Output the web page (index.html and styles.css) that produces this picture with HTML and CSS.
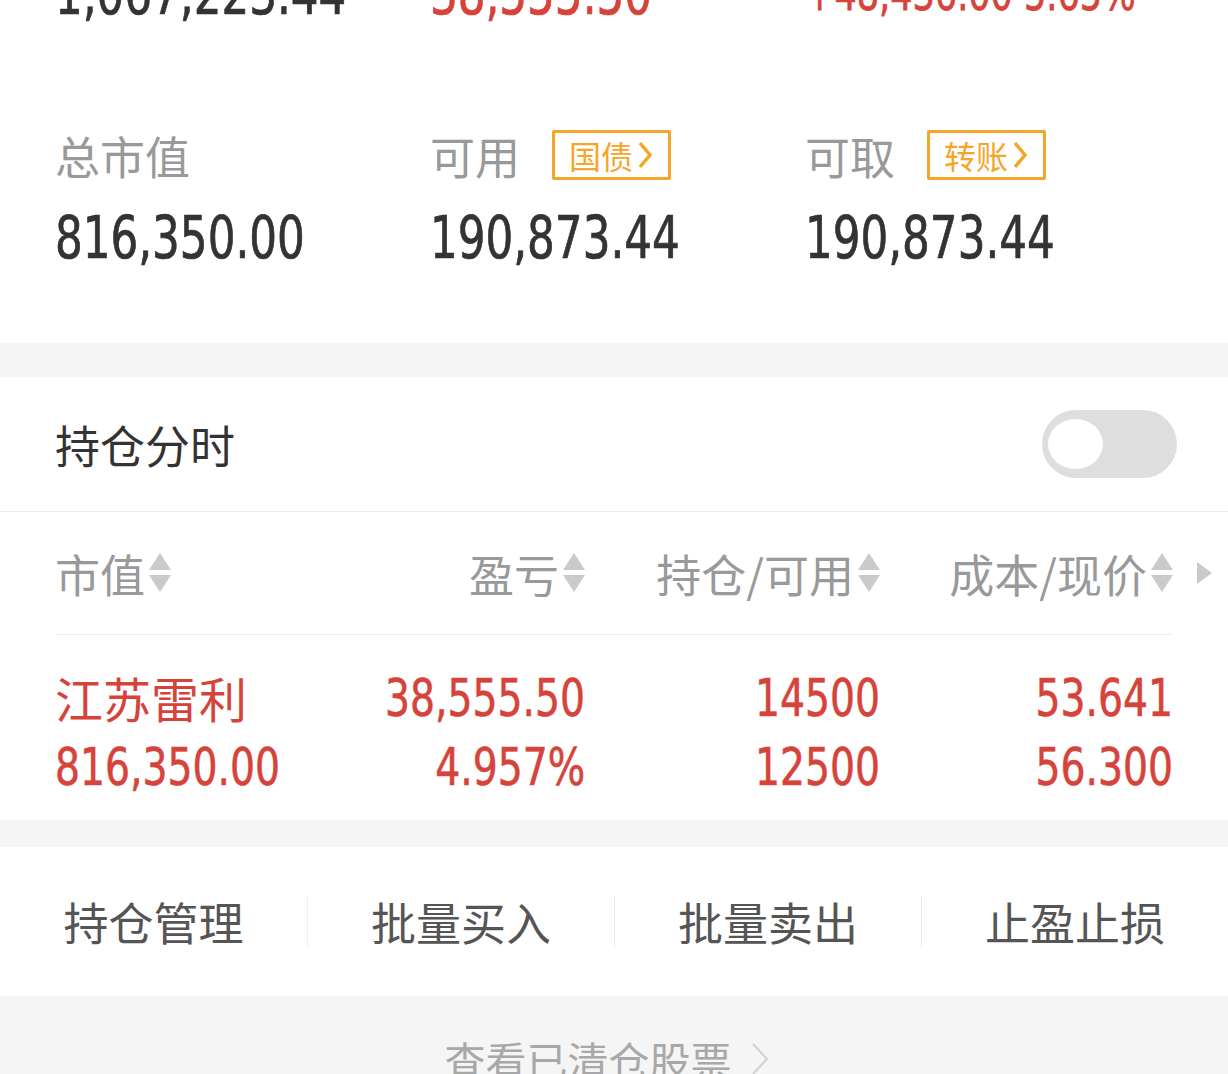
FILE: index.html
```html
<!doctype html>
<html>

<head>
  <meta charset="UTF-8">
  <title>持仓</title>
  <link rel="stylesheet" href="styles.css">
</head>

<body>
  <section class="summary">
    <div class="sum-top">
      <div class="num dark">1,067,223.44</div>
      <div class="num red">38,555.50</div>
      <div class="num red small">+48,436.00 5.65%</div>
    </div>

    <div class="sum-grid">
      <div class="cell">
        <div class="label">总市值</div>
        <div class="num dark">816,350.00</div>
      </div>
      <div class="cell">
        <div class="label">可用 <span class="badge">国债<svg width="16" height="30" viewBox="0 0 16 30"><polyline points="3,3 13,15 3,27" /></svg></span></div>
        <div class="num dark">190,873.44</div>
      </div>
      <div class="cell">
        <div class="label">可取 <span class="badge">转账<svg width="16" height="30" viewBox="0 0 16 30"><polyline points="3,3 13,15 3,27" /></svg></span></div>
        <div class="num dark">190,873.44</div>
      </div>
    </div>
  </section>

  <section class="holdings">
    <div class="switch-row">
      <span class="switch-title">持仓分时</span>
      <span class="toggle"><span class="knob"></span></span>
    </div>

    <div class="table-head">
      <div class="th left">市值<svg class="sort" width="22" height="40" viewBox="0 0 22 40"><polygon points="11,0 22,17 0,17" /><polygon points="0,22 22,22 11,39" /></svg></div>
      <div class="th">盈亏<svg class="sort" width="22" height="40" viewBox="0 0 22 40"><polygon points="11,0 22,17 0,17" /><polygon points="0,22 22,22 11,39" /></svg></div>
      <div class="th">持仓/可用<svg class="sort" width="22" height="40" viewBox="0 0 22 40"><polygon points="11,0 22,17 0,17" /><polygon points="0,22 22,22 11,39" /></svg></div>
      <div class="th">成本/现价<svg class="sort" width="22" height="40" viewBox="0 0 22 40"><polygon points="11,0 22,17 0,17" /><polygon points="0,22 22,22 11,39" /></svg></div>
      <svg class="more" width="15" height="22" viewBox="0 0 15 22"><polygon points="0,0 15,11 0,22" /></svg>
    </div>

    <div class="stock-row">
      <div class="td left name">江苏雷利</div>
      <div class="td"><span>38,555.50</span></div>
      <div class="td"><span>14500</span></div>
      <div class="td"><span>53.641</span></div>
      <div class="td left"><span>816,350.00</span></div>
      <div class="td"><span>4.957%</span></div>
      <div class="td"><span>12500</span></div>
      <div class="td"><span>56.300</span></div>
    </div>
  </section>

  <section class="actions">
    <div class="action">持仓管理</div>
    <div class="action">批量买入</div>
    <div class="action">批量卖出</div>
    <div class="action">止盈止损</div>
  </section>

  <div class="cleared">
    查看已清仓股票
    <svg width="20" height="36" viewBox="0 0 20 36"><polyline points="3,3 17,18 3,33" /></svg>
  </div>
</body>

</html>
```

FILE: styles.css
```css
body {
  margin: 0;
  background: #f5f5f5;
  font-family: "Noto Sans CJK SC", sans-serif;
  overflow: hidden;
}

/* digits are tall and narrow in the app font */
.num,
.td span {
  font-family: "DejaVu Sans Condensed", "Liberation Sans", sans-serif;
  white-space: nowrap;
}

.dark {
  color: #333;
}

.red {
  color: #d6433b;
}

/* account summary */
.summary {
  background: #fff;
  padding: 0 0 70px 55px;
}

.sum-top,
.sum-grid {
  display: grid;
  grid-template-columns: 375px 375px 375px;
}

.sum-top {
  margin-top: -41px;
}

.num {
  font-size: 48.5px;
  line-height: 70px;
  transform: scaleY(1.2);
  -webkit-text-stroke: 0.6px currentColor;
}

.num.small {
  font-size: 39px;
  transform: scaleY(1.25);
}

.sum-grid {
  margin-top: 96px;
}

.label {
  display: flex;
  align-items: center;
  gap: 32px;
  height: 60px;
  margin-bottom: 18px;
  font-size: 45px;
  color: #999;
}

.badge {
  display: flex;
  align-items: center;
  gap: 4px;
  box-sizing: border-box;
  height: 50px;
  padding: 0 15px 0 14px;
  border: 3px solid #f5a52a;
  border-radius: 2px;
  font-size: 32px;
  color: #f5a52a;
}

.badge polyline {
  fill: none;
  stroke: #f5a52a;
  stroke-width: 3.5;
}

/* holdings */
.holdings {
  margin-top: 34px;
  background: #fff;
}

.switch-row {
  display: flex;
  align-items: center;
  justify-content: space-between;
  height: 134px;
  padding: 0 51px 0 55px;
  border-bottom: 1px solid #eee;
}

.switch-title {
  font-size: 45px;
  color: #333;
}

.toggle {
  display: flex;
  align-items: center;
  width: 135px;
  height: 68px;
  padding-left: 6px;
  box-sizing: border-box;
  border-radius: 34px;
  background: #dedede;
}

.knob {
  width: 55px;
  height: 50px;
  border-radius: 50%;
  background: #fff;
}

.table-head {
  display: grid;
  grid-template-columns: 240px 290px 295px 293px 15px;
  align-items: center;
  height: 122px;
  padding: 0 0 0 55px;
}

.th {
  display: flex;
  align-items: center;
  justify-content: flex-end;
  gap: 4px;
  font-size: 45px;
  color: #999;
}

.th.left {
  justify-content: flex-start;
}

.sort polygon,
.more polygon {
  fill: #cacaca;
}

.more {
  margin-left: 24px;
}

.stock-row {
  display: grid;
  grid-template-columns: 240px 290px 295px 293px;
  margin: 0 55px;
  padding: 28px 0 19px;
  border-top: 1px solid #eee;
}

.td {
  height: 69px;
  font-size: 43.7px;
  line-height: 69px;
  color: #d6433b;
  text-align: right;
}

.td span {
  display: inline-block;
  vertical-align: top;
  line-height: 69px;
  transform: scaleY(1.17);
  -webkit-text-stroke: 0.5px currentColor;
}

.td.left {
  text-align: left;
}

.td.name {
  font-size: 48px;
}

/* bottom actions */
.actions {
  display: grid;
  grid-template-columns: repeat(4, 1fr);
  align-items: center;
  height: 149px;
  margin-top: 27px;
  background: #fff;
}

.action {
  line-height: 53px;
  font-size: 45px;
  color: #555;
  text-align: center;
  border-left: 1px solid #eee;
}

.action:first-child {
  border-left: none;
}

.cleared {
  display: flex;
  justify-content: center;
  align-items: center;
  gap: 18px;
  margin-top: 38px;
  padding-right: 14px;
  line-height: 50px;
  font-size: 41px;
  color: #a8a8a8;
}

.cleared polyline {
  fill: none;
  stroke: #d0d0d0;
  stroke-width: 2;
}
```
